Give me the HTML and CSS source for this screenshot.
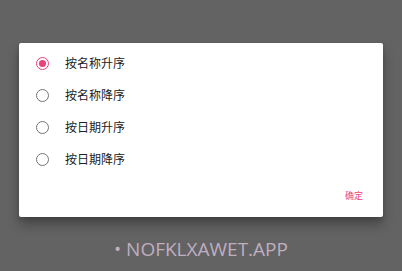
FILE: index.html
```html
<!DOCTYPE html>
<html lang="zh">
<head>
<meta charset="utf-8">
<link rel="stylesheet" href="styles.css">
</head>
<body>
<div class="screen">
  <div class="dialog">
    <div class="options">
      <div class="option">
        <span class="radio checked"><span class="dot"></span></span>
        <span class="label">按名称升序</span>
      </div>
      <div class="option">
        <span class="radio"></span>
        <span class="label">按名称降序</span>
      </div>
      <div class="option">
        <span class="radio"></span>
        <span class="label">按日期升序</span>
      </div>
      <div class="option">
        <span class="radio"></span>
        <span class="label">按日期降序</span>
      </div>
    </div>
    <div class="actions">
      <span class="btn">确定</span>
    </div>
  </div>
  <div class="footer">• NOFKLXAWET.APP</div>
</div>
</body>
</html>
```

FILE: styles.css
```css
html, body {
  margin: 0;
  padding: 0;
}
body {
  width: 402px;
  height: 271px;
  overflow: hidden;
  background: #636363;
  font-family: "Noto Sans CJK SC", "Noto Sans", sans-serif;
}
.screen {
  display: flex;
  flex-direction: column;
  padding: 43px 0 0 19px;
  height: 271px;
  box-sizing: border-box;
}
.dialog {
  width: 364px;
  height: 174px;
  background: #ffffff;
  border-radius: 2px;
  box-shadow: 0 8px 12px rgba(0, 0, 0, 0.28), 0 2px 4px rgba(0, 0, 0, 0.15);
  display: flex;
  flex-direction: column;
  box-sizing: border-box;
  padding-top: 4px;
}
.options {
  display: flex;
  flex-direction: column;
}
.option {
  height: 32px;
  display: flex;
  align-items: center;
}
.radio {
  width: 13px;
  height: 13px;
  box-sizing: border-box;
  border: 1.6px solid #757575;
  border-radius: 50%;
  margin-left: 17px;
  display: flex;
  align-items: center;
  justify-content: center;
}
.radio.checked {
  border-color: #ec407a;
}
.dot {
  width: 7px;
  height: 7px;
  border-radius: 50%;
  background: #ec407a;
}
.label {
  margin-left: 16px;
  font-size: 12px;
  color: #212121;
  line-height: 16px;
}
.actions {
  flex: 1;
  display: flex;
  align-items: center;
  justify-content: flex-end;
  padding-right: 20px;
}
.btn {
  font-size: 9px;
  color: #ec407a;
  line-height: 12px;
}
.footer {
  margin-left: -19px;
  margin-top: 20px;
  text-align: center;
  font-family: "Open Sans", sans-serif;
  font-size: 19px;
  line-height: 24px;
  color: #bfaec0;
}
```
